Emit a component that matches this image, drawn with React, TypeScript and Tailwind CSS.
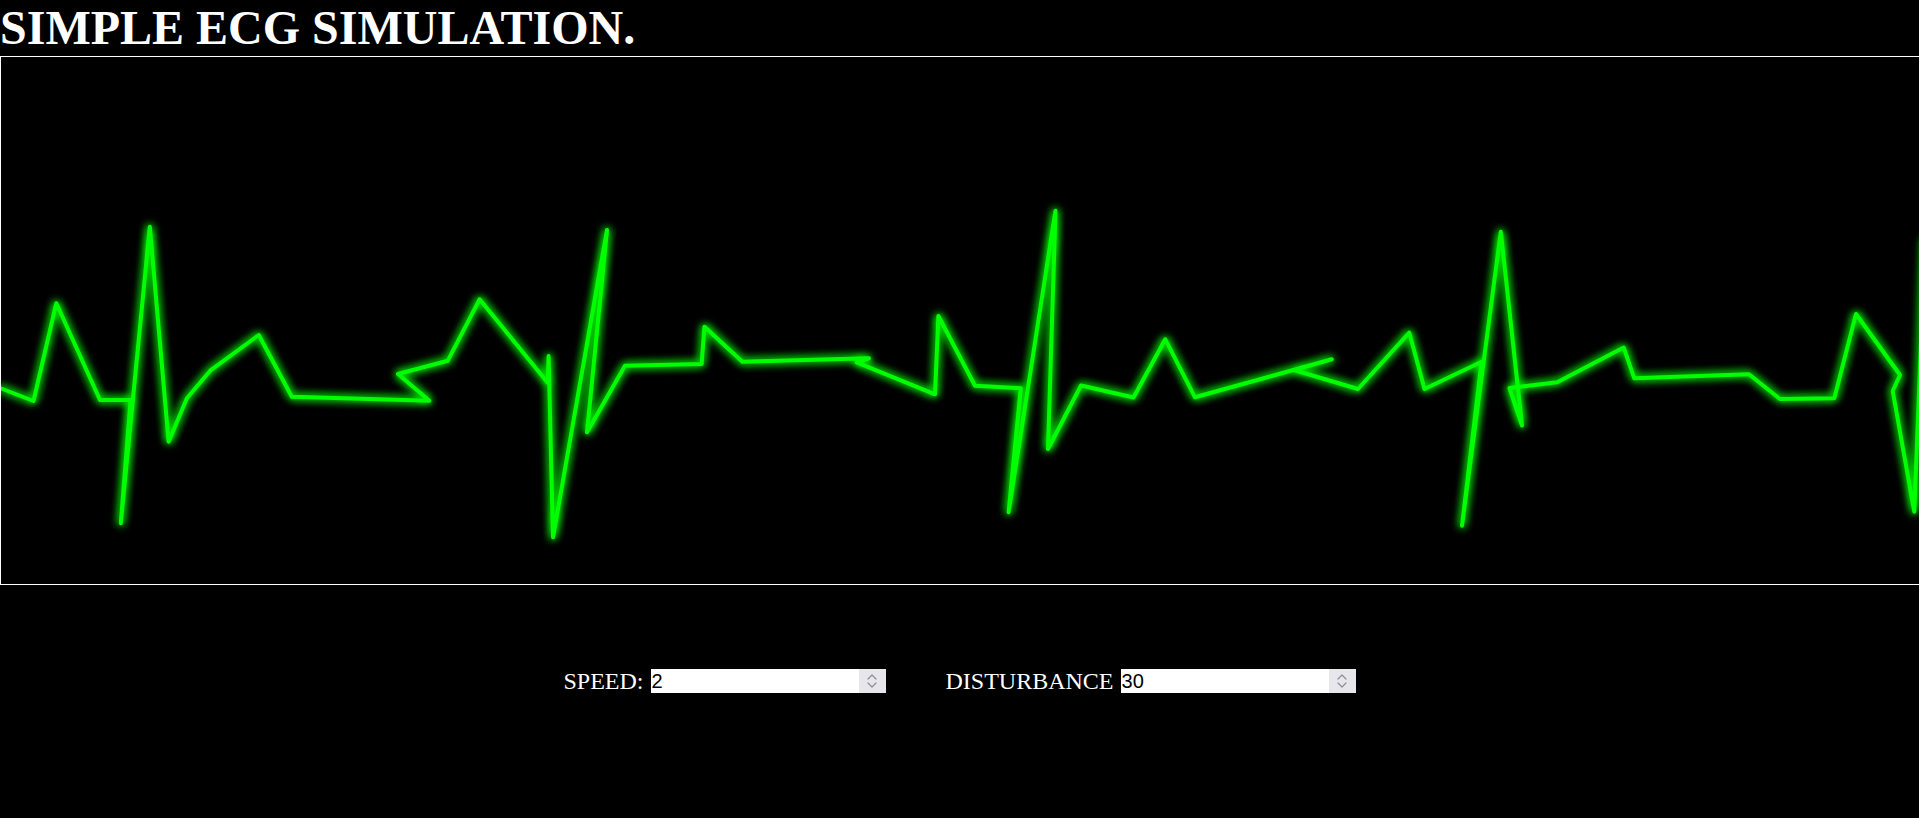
import { ChevronDown, ChevronUp } from "lucide-react"

// trace of the ecg line, page pixel coords
const ecgPoints: [number, number][] = [
	[0, 388], [33.5, 401], [56.3, 303.3], [100, 400], [130.6, 400], [120.8, 523.3], [149.8, 226.7],
	[168.6, 441.7], [186.9, 398.3], [210.2, 370.7], [258.8, 335], [291.8, 396.7], [429.4, 400.7],
	[398, 374], [447.8, 360.7], [479.6, 299.3], [547.8, 382.7], [548.6, 356], [553, 537.3],
	[607, 230], [587, 432.3], [625, 365.7], [701.6, 364], [704.5, 326.7], [742.4, 361.7],
	[869, 358.3], [856.7, 362.3], [935, 394.3], [938.4, 316], [975, 385.7], [1020.8, 388.3],
	[1008.6, 512.3], [1055.5, 210.7], [1048, 449], [1081, 385.5], [1133.5, 397.5], [1165.3, 339.3],
	[1195, 397.3], [1331.8, 359.3], [1293.9, 370], [1358, 389], [1409.3, 332.7], [1424.5, 389],
	[1481.6, 361.7], [1462, 525.7], [1500.8, 231.7], [1522, 425.5], [1509.5, 388], [1557.2, 382.3],
	[1623.7, 347.5], [1634.3, 378.3], [1749, 374.3], [1780, 399], [1834.3, 398.3], [1856, 314],
	[1900, 375], [1892.7, 391], [1914.3, 511.7], [1925, 240],
]

const NumberField = ({ value }: { value: string }) => {
	return (
		<div className="flex h-6 w-[235px] bg-white">
			<input
				type="text"
				defaultValue={value}
				className="min-w-0 flex-1 bg-transparent pl-[1px] text-[20px] leading-6 text-black outline-none font-['Liberation_Sans',Arial,sans-serif]"
			/>
			<div className="flex w-[27px] flex-col items-center justify-center bg-[#e6e6eb] text-[#8e8e96]">
				<ChevronUp size={18} strokeWidth={1.8} className="-mb-[4px]" />
				<ChevronDown size={18} strokeWidth={1.8} className="-mt-[4px]" />
			</div>
		</div>
	)
}

export default function App() {
	const line = ecgPoints.map(([x, y]) => `${x},${y}`).join(" ")

	return (
		<div className="min-h-[818px] bg-black text-white font-['Liberation_Serif','Times_New_Roman',serif]">
			<h1 className="text-[48px] font-bold leading-[56px]">SIMPLE ECG SIMULATION.</h1>

			<div className="h-[529px] overflow-hidden border border-r-0 border-white bg-black">
				<svg width={1918} height={527} viewBox="1 57 1918 527" className="block">
					<defs>
						<filter id="glow" x="-10%" y="-10%" width="120%" height="120%">
							<feGaussianBlur in="SourceGraphic" stdDeviation="4" result="blur" />
							<feMerge>
								<feMergeNode in="blur" />
								<feMergeNode in="blur" />
								<feMergeNode in="SourceGraphic" />
							</feMerge>
						</filter>
					</defs>
					<polyline
						points={line}
						fill="none"
						stroke="#00ff00"
						strokeWidth={4}
						strokeLinejoin="round"
						strokeLinecap="round"
						filter="url(#glow)"
					/>
				</svg>
			</div>

			<div className="mt-[84px] flex justify-center gap-[60px] text-[24px] leading-6">
				<label className="flex items-center">
					<span className="mr-[7px]">SPEED:</span>
					<NumberField value="2" />
				</label>
				<label className="flex items-center">
					<span className="mr-[7px]">DISTURBANCE</span>
					<NumberField value="30" />
				</label>
			</div>
		</div>
	)
}
